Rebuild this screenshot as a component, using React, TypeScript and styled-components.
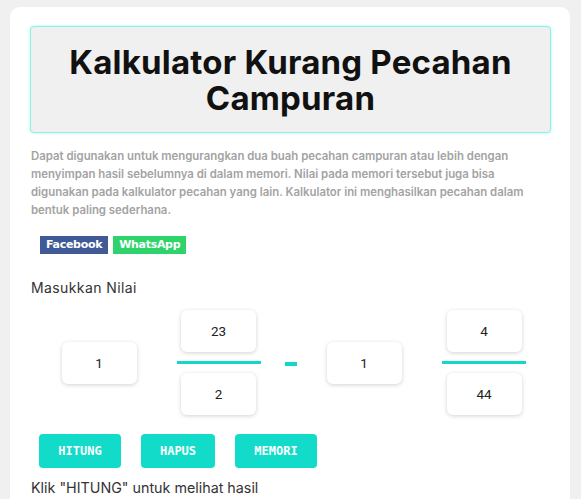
import React from 'react';
import styled, { createGlobalStyle } from 'styled-components';

const GlobalStyle = createGlobalStyle`
    body {
        margin: 0;
        background: #f0f0f0;
        font-family: 'Inter', 'Open Sans', sans-serif;
    }
`

const Card = styled.div`
    margin: 7px 11px 0 10px;
    background: #ffffff;
    border-radius: 10px;
    padding: 19px 19px 12px 20px;
    min-height: 480px;
    box-sizing: border-box;
`

const TitleBox = styled.div`
    background: #f0f0f0;
    border: 1px solid #8ff0e6;
    box-shadow: 0 0 3px #9ff5ec;
    border-radius: 4px;
    padding: 17px 8px 16px;
    text-align: center;
`

const Title = styled.h1`
    margin: 0;
    font-family: 'Inter', sans-serif;
    font-weight: 700;
    font-size: 33px;
    line-height: 36px;
    letter-spacing: 0.2px;
    color: #111111;
`

const Description = styled.p`
    margin: 14px 0 0 1px;
    font-family: 'Inter', sans-serif;
    font-weight: 600;
    font-size: 11.4px;
    line-height: 18px;
    color: #a3a3a3;
`

const ShareRow = styled.div`
    display: flex;
    gap: 5px;
    margin: 17px 0 0 10px;
`

const ShareButton = styled.span<{ $bg: string }>`
    display: inline-block;
    background: ${p => p.$bg};
    color: #ffffff;
    font-family: 'DejaVu Sans', sans-serif;
    font-weight: 700;
    font-size: 11px;
    line-height: 18px;
    padding: 0 6px;
    letter-spacing: -0.3px;
`

const Label = styled.div`
    margin: 25px 0 0 1px;
    font-family: 'Inter', sans-serif;
    font-weight: 400;
    font-size: 14px;
    letter-spacing: 0.4px;
    color: #333333;
    line-height: 18px;
`

const InputRow = styled.div`
    display: grid;
    grid-template-columns: 138px 101px 44px 102px 138px;
    align-items: center;
    margin-top: 13px;
`

const Cell = styled.div`
    display: flex;
    flex-direction: column;
    align-items: center;
`

const NumBox = styled.div`
    width: 75px;
    height: 42px;
    border-radius: 6px;
    background: #ffffff;
    box-shadow: 0 1px 4px rgba(0, 0, 0, 0.18);
    display: flex;
    align-items: center;
    justify-content: center;
    font-family: 'Roboto', 'Liberation Sans', sans-serif;
    font-size: 13.5px;
    color: #222222;
`

const FractionLine = styled.div<{ $w: number }>`
    width: ${p => p.$w}px;
    height: 3px;
    background: #12d9c7;
    margin: 9px 0;
`

const Minus = styled.div`
    width: 12px;
    height: 4px;
    background: #12d9c7;
    margin-top: 2px;
`

const ButtonRow = styled.div`
    display: flex;
    gap: 20px;
    margin: 19px 0 0 9px;
`

const ActionButton = styled.button<{ $w: number }>`
    width: ${p => p.$w}px;
    height: 34px;
    border: none;
    border-radius: 4px;
    background: #12dcc9;
    color: #ffffff;
    font-family: 'DejaVu Sans Mono', monospace;
    font-weight: 700;
    font-size: 12px;
    padding: 0;
`

const Hint = styled.div`
    margin: 10px 0 0 1px;
    font-family: 'Inter', sans-serif;
    font-size: 14.3px;
    color: #333333;
    line-height: 20px;
`

const App: React.FC = () => {
    return (
        <React.Fragment>
            <GlobalStyle />
            <Card>
                <TitleBox>
                    <Title>Kalkulator Kurang Pecahan Campuran</Title>
                </TitleBox>
                <Description>
                    Dapat digunakan untuk mengurangkan dua buah pecahan campuran atau lebih dengan
                    menyimpan hasil sebelumnya di dalam memori. Nilai pada memori tersebut juga bisa
                    digunakan pada kalkulator pecahan yang lain. Kalkulator ini menghasilkan pecahan dalam
                    bentuk paling sederhana.
                </Description>
                <ShareRow>
                    <ShareButton $bg="#3f5a96">Facebook</ShareButton>
                    <ShareButton $bg="#2ed36b">WhatsApp</ShareButton>
                </ShareRow>
                <Label>Masukkan Nilai</Label>
                <InputRow>
                    <Cell>
                        <NumBox>1</NumBox>
                    </Cell>
                    <Cell>
                        <NumBox>23</NumBox>
                        <FractionLine $w={84} />
                        <NumBox>2</NumBox>
                    </Cell>
                    <Cell>
                        <Minus />
                    </Cell>
                    <Cell>
                        <NumBox>1</NumBox>
                    </Cell>
                    <Cell>
                        <NumBox>4</NumBox>
                        <FractionLine $w={84} />
                        <NumBox>44</NumBox>
                    </Cell>
                </InputRow>
                <ButtonRow>
                    <ActionButton $w={82}>HITUNG</ActionButton>
                    <ActionButton $w={74}>HAPUS</ActionButton>
                    <ActionButton $w={82}>MEMORI</ActionButton>
                </ButtonRow>
                <Hint>Klik "HITUNG" untuk melihat hasil</Hint>
            </Card>
        </React.Fragment>
    )
}

export default App;
